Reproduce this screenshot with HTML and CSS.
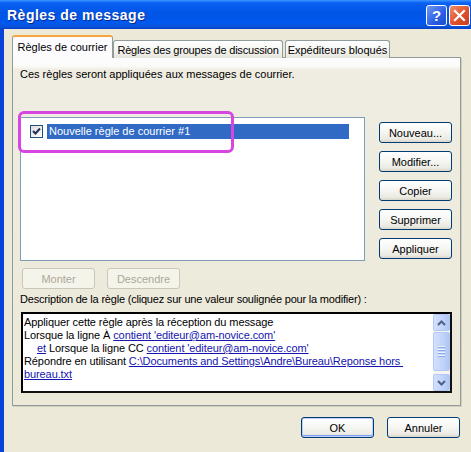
FILE: index.html
```html
<!DOCTYPE html>
<html lang="fr">
  <head>
    <meta charset="UTF-8" />
    <meta name="viewport" content="width=device-width, initial-scale=1.0" />
    <title>Règles de message</title>
    <link rel="stylesheet" href="styles.css">
  </head>
  <body>
    <div class="window">
      <div class="titlebar">
        <span class="title">Règles de message</span>
        <div class="title-buttons">
          <span class="tb-btn help">?</span>
          <span class="tb-btn close">
            <svg width="13" height="13" viewBox="0 0 13 13">
              <path d="M2 2 L11 11 M11 2 L2 11" stroke="#fff" stroke-width="2.2" stroke-linecap="square" />
            </svg>
          </span>
        </div>
      </div>

      <div class="client">
        <div class="tabs">
          <div class="tab active">Règles de courrier</div>
          <div class="tab tab-groups">Règles des groupes de discussion</div>
          <div class="tab tab-blocked">Expéditeurs bloqués</div>
        </div>

        <div class="panel">
          <p class="intro">Ces règles seront appliquées aux messages de courrier.</p>

          <div class="rules-row">
            <div class="rule-list">
              <div class="rule-item">
                <span class="checkbox">
                  <svg width="9" height="9" viewBox="0 0 9 9">
                    <path d="M1 4 L3.5 6.5 L8 1.5" fill="none" stroke="#1f2f5a" stroke-width="2" />
                  </svg>
                </span>
                <span class="rule-name">Nouvelle règle de courrier #1</span>
              </div>
            </div>
            <div class="side-buttons">
              <button class="btn">Nouveau...</button>
              <button class="btn">Modifier...</button>
              <button class="btn">Copier</button>
              <button class="btn">Supprimer</button>
              <button class="btn">Appliquer</button>
            </div>
          </div>

          <div class="move-buttons">
            <button class="btn" disabled>Monter</button>
            <button class="btn" disabled>Descendre</button>
          </div>

          <p class="desc-label">Description de la règle (cliquez sur une valeur soulignée pour la modifier) :</p>

          <div class="desc-box">
            <div class="desc-text">
              <div>Appliquer cette règle après la réception du message</div>
              <div>Lorsque la ligne À <a href="#">contient 'editeur@am-novice.com'</a></div>
              <div class="indent"><a href="#">et</a> Lorsque la ligne CC <a href="#">contient 'editeur@am-novice.com'</a></div>
              <div>Répondre en utilisant <a href="#">C:\Documents and Settings\Andre\Bureau\Reponse hors&nbsp;</a></div>
              <div><a href="#">bureau.txt</a></div>
            </div>
            <div class="scrollbar">
              <div class="sb-btn">
                <svg width="9" height="6" viewBox="0 0 9 6"><path d="M1 5 L4.5 1.5 L8 5" fill="none" stroke="#4d6185" stroke-width="2" /></svg>
              </div>
              <div class="sb-track">
                <div class="sb-thumb">
                  <span class="grip"></span><span class="grip"></span><span class="grip"></span><span class="grip"></span>
                </div>
              </div>
              <div class="sb-btn">
                <svg width="9" height="6" viewBox="0 0 9 6"><path d="M1 1 L4.5 4.5 L8 1" fill="none" stroke="#4d6185" stroke-width="2" /></svg>
              </div>
            </div>
          </div>
        </div>

        <div class="footer">
          <button class="btn default">OK</button>
          <button class="btn">Annuler</button>
        </div>
      </div>

      <div class="highlight-mark"></div>
    </div>
  </body>
</html>
```

FILE: styles.css
```css
body {
  margin: 0;
  background-color: #ece9d8;
  font-family: "Liberation Sans", Arial, sans-serif;
  font-size: 11px;
  overflow: hidden;
}
p {
  margin: 0;
}
.window {
  position: relative;
  width: 471px;
  height: 452px;
  box-sizing: border-box;
  border-left: 4px solid #0842d8;
  background-color: #ece9d8;
}

/* title bar */
.titlebar {
  height: 29px;
  margin-left: -4px;
  padding-left: 7px;
  display: flex;
  align-items: center;
  justify-content: space-between;
  background: linear-gradient(#3d95ff 0%, #0a61f4 10%, #0055e5 45%, #0058ee 80%, #0a52d8 92%, #0540c8 100%);
}
.title {
  color: #fff;
  font-weight: bold;
  font-size: 14px;
  text-shadow: 1px 1px 0 #0c2a8a;
  letter-spacing: 0.5px;
}
.title-buttons {
  display: flex;
  gap: 2px;
  padding-right: 1px;
  margin-top: 1px;
}
.tb-btn {
  width: 19px;
  height: 19px;
  border: 1px solid #fff;
  border-radius: 3px;
  display: flex;
  align-items: center;
  justify-content: center;
  color: #fff;
  font-weight: bold;
  font-size: 15px;
}
.help {
  background: linear-gradient(135deg, #6f98f4, #2a5ee6 60%, #1d4ccc);
}
.close {
  background: linear-gradient(135deg, #f0906c, #e0502c 55%, #c83c1c);
}

/* client area */
.client {
  padding: 7px 0 0 8px;
}
.tabs {
  display: flex;
  align-items: flex-end;
  height: 22px;
  margin-bottom: -1px;
  position: relative;
}
.tab {
  height: 18px;
  box-sizing: border-box;
  border: 1px solid #919b9c;
  border-bottom: none;
  border-radius: 3px 3px 0 0;
  background: linear-gradient(#ffffff, #f3f3ef 60%, #e6e4dc);
  display: flex;
  align-items: center;
  justify-content: center;
  color: #000;
}
.tab.active {
  width: 101px;
  height: 23px;
  border-top: 2px solid #f4a53c;
  background: #fcfcfe;
  padding-bottom: 1px;
  z-index: 1;
}
.tab-groups {
  width: 170px;
  letter-spacing: -0.2px;
}
.tab-blocked {
  width: 105px;
  margin-left: 2px;
}

.panel {
  width: 449px;
  height: 349px;
  box-sizing: border-box;
  border: 1px solid #919b9c;
  padding: 10px 8px 0 7px;
  background: linear-gradient(#fcfcfe 0px, #fbfbf9 8px, #efede2 12px, #ece9d8 100%);
  box-shadow: 1px 1px 0 #d2cfbf;
}
.intro {
  line-height: 13px;
  height: 13px;
}

.rules-row {
  display: flex;
  margin-top: 36px;
}
.rule-list {
  width: 345px;
  height: 144px;
  box-sizing: border-box;
  border: 1px solid #7f9db9;
  background: #fff;
  padding: 6px 0 0 9px;
}
.rule-item {
  display: flex;
  align-items: center;
  gap: 4px;
}
.checkbox {
  width: 11px;
  height: 11px;
  border: 1px solid #1c5180;
  background: linear-gradient(135deg, #dcdcd7, #fff);
  display: flex;
  align-items: center;
  justify-content: center;
}
.rule-name {
  width: 302px;
  height: 15px;
  line-height: 15px;
  padding-left: 2px;
  box-sizing: border-box;
  background: #316ac5;
  color: #fff;
}
.side-buttons {
  display: flex;
  flex-direction: column;
  gap: 8px;
  margin: 5px 0 0 14px;
}

.btn {
  width: 73px;
  height: 21px;
  padding: 0;
  border: 1px solid #003c74;
  border-radius: 3px;
  background: linear-gradient(#ffffff, #f5f5f2 50%, #ebeae3 85%, #d8d5c9);
  font-family: inherit;
  font-size: 11px;
  color: #000;
}
.btn:disabled {
  border-color: #c9c7ba;
  background: #f5f4ea;
  color: #aca899;
}
.move-buttons {
  display: flex;
  gap: 12px;
  margin: 7px 0 0 2px;
}
.desc-label {
  margin-top: 4px;
  line-height: 13px;
  letter-spacing: -0.2px;
}

.desc-box {
  display: flex;
  width: 431px;
  height: 81px;
  box-sizing: border-box;
  margin: 6px 0 0 1px;
  border: 2px solid #111;
  border-top-color: #000;
  border-left-color: #000;
  background: #fff;
}
.desc-text {
  flex: 1;
  padding: 2px 0 0 1px;
  line-height: 13px;
  white-space: nowrap;
  letter-spacing: -0.1px;
}
.desc-text a {
  color: #1515b0;
}
.indent {
  padding-left: 13px;
}

.scrollbar {
  width: 17px;
  display: flex;
  flex-direction: column;
  background: #f5f4ef;
}
.sb-btn,
.sb-thumb {
  box-sizing: border-box;
  border: 1px solid #b4c8f6;
  border-radius: 2px;
  background: linear-gradient(90deg, #d3e0fd, #c1d3fb 60%, #b0c5f5);
  display: flex;
  align-items: center;
  justify-content: center;
}
.sb-btn {
  height: 17px;
}
.sb-track {
  flex: 1;
  padding: 1px 0 3px;
  display: flex;
}
.sb-thumb {
  flex: 1;
  flex-direction: column;
  gap: 1px;
}
.grip {
  width: 7px;
  height: 1px;
  background: #eef2fd;
  border-bottom: 1px solid #8caaeb;
}

.footer {
  display: flex;
  justify-content: flex-end;
  gap: 13px;
  width: 448px;
  padding-top: 11px;
}
.btn.default {
  box-shadow: inset 0 0 0 1px #b9d1fa, inset 0 -1px 0 1px #7fa3ee;
}

/* magenta annotation drawn over the list */
.highlight-mark {
  position: absolute;
  left: 14px;
  top: 111px;
  width: 216px;
  height: 42px;
  box-sizing: border-box;
  border: 3px solid #d746e0;
  border-radius: 6px;
}
```
